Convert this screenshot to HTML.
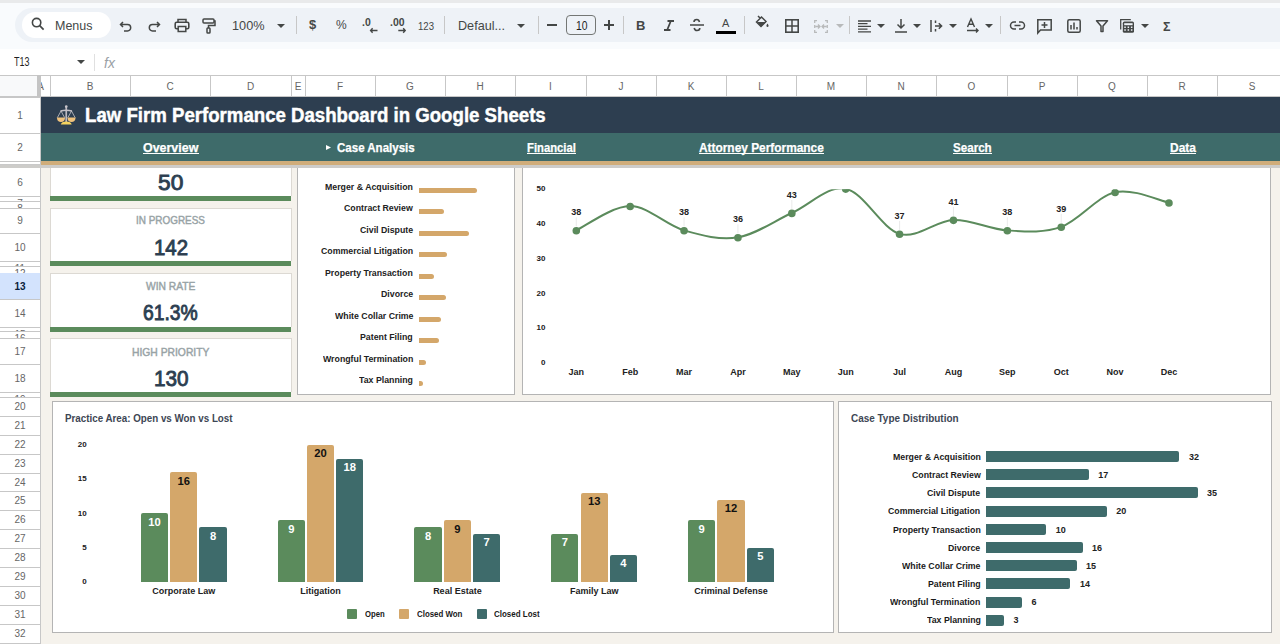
<!DOCTYPE html>
<html><head><meta charset="utf-8">
<style>
*{margin:0;padding:0;box-sizing:border-box}
html,body{width:1280px;height:644px;overflow:hidden;background:#f9fbfd;font-family:"Liberation Sans",sans-serif;position:relative}
.a{position:absolute}
.t{position:absolute;white-space:nowrap;line-height:1}
svg{position:absolute;overflow:visible}
</style></head><body>
<div class="a" style="left:0px;top:0px;width:1280px;height:2.5px;background:#e9eaeb;"></div>
<div class="a" style="left:15px;top:8px;width:1300px;height:33.5px;background:#eef2f7;border-radius:17px"></div>
<div class="a" style="left:22px;top:12px;width:89px;height:26px;background:#ffffff;border-radius:13px"></div>
<svg style="left:31px;top:17px" width="14" height="14" viewBox="0 0 14 14"><circle cx="5.6" cy="5.6" r="4.2" fill="none" stroke="#444746" stroke-width="1.6"/><line x1="8.7" y1="8.7" x2="12.6" y2="12.6" stroke="#444746" stroke-width="1.7"/></svg>
<div class="t" style="left:54.50px;top:19.00px;font-size:13px;color:#444746;font-weight:normal;transform:scaleX(0.9612);transform-origin:0 0;">Menus</div>
<svg style="left:119px;top:19px" width="14" height="14" viewBox="0 0 14 14"><path d="M4 3 L1.5 5.5 L4 8 M1.8 5.5 H8.5 a3.2 3.2 0 0 1 0 6.4 H5" fill="none" stroke="#444746" stroke-width="1.5"/></svg>
<svg style="left:147px;top:19px" width="14" height="14" viewBox="0 0 14 14"><path d="M10 3 L12.5 5.5 L10 8 M12.2 5.5 H5.5 a3.2 3.2 0 0 0 0 6.4 H9" fill="none" stroke="#444746" stroke-width="1.5"/></svg>
<svg style="left:174px;top:18px" width="16" height="15" viewBox="0 0 16 15"><path d="M4 4 V1.5 H12 V4" fill="none" stroke="#444746" stroke-width="1.5"/><rect x="1.2" y="4.2" width="13.6" height="6.6" rx="1.5" fill="none" stroke="#444746" stroke-width="1.6"/><rect x="4.2" y="8.5" width="7.6" height="5" fill="#eef2f7" stroke="#444746" stroke-width="1.5"/></svg>
<svg style="left:202px;top:18px" width="14" height="16" viewBox="0 0 14 16"><rect x="1" y="1" width="11" height="4" rx="1" fill="none" stroke="#444746" stroke-width="1.5"/><path d="M12 3 H13 V7.5 H6.5 V10" fill="none" stroke="#444746" stroke-width="1.5"/><rect x="5" y="10" width="3" height="5" rx="0.8" fill="none" stroke="#444746" stroke-width="1.5"/></svg>
<div class="t" style="left:232.00px;top:19.00px;font-size:13px;color:#444746;font-weight:normal;transform:scaleX(0.9773);transform-origin:0 0;">100%</div>
<svg style="left:277px;top:24px" width="8" height="4" viewBox="0 0 8 4"><path d="M0 0 H8 L4 4Z" fill="#444746"/></svg>
<div class="a" style="left:296px;top:16px;width:1px;height:18px;background:#c7c7c7;"></div>
<div class="t" style="left:309px;top:18px;font-size:13px;color:#444746;font-weight:bold;">$</div>
<div class="t" style="left:336px;top:19px;font-size:12px;color:#444746;font-weight:normal;">%</div>
<div class="t" style="left:362.30px;top:17.00px;font-size:11px;color:#444746;font-weight:bold;transform:scaleX(0.9483);transform-origin:0 0;">.0</div>
<svg style="left:369.5px;top:28px" width="8" height="5" viewBox="0 0 8 5"><path d="M2.6 0.3 L0.6 2.5 L2.6 4.7 M1 2.5 H7.5" fill="none" stroke="#444746" stroke-width="1.4"/></svg>
<div class="t" style="left:390.30px;top:17.00px;font-size:11px;color:#444746;font-weight:bold;transform:scaleX(0.9483);transform-origin:0 0;">.00</div>
<svg style="left:397.5px;top:28px" width="8" height="5" viewBox="0 0 8 5"><path d="M5.2 0.3 L7.2 2.5 L5.2 4.7 M6.8 2.5 H0.3" fill="none" stroke="#444746" stroke-width="1.4"/></svg>
<div class="t" style="left:418.00px;top:21.00px;font-size:11px;color:#444746;font-weight:normal;transform:scaleX(0.8720);transform-origin:0 0;">123</div>
<div class="a" style="left:444px;top:16px;width:1px;height:18px;background:#c7c7c7;"></div>
<div class="t" style="left:458.00px;top:19.00px;font-size:13px;color:#444746;font-weight:normal;transform:scaleX(0.9708);transform-origin:0 0;">Defaul...</div>
<svg style="left:517px;top:24px" width="8" height="4" viewBox="0 0 8 4"><path d="M0 0 H8 L4 4Z" fill="#444746"/></svg>
<div class="a" style="left:538px;top:16px;width:1px;height:18px;background:#c7c7c7;"></div>
<div class="a" style="left:547px;top:24px;width:10px;height:1.6px;background:#444746;"></div>
<div class="a" style="left:566px;top:15px;width:30px;height:20px;background:transparent;border:1px solid #747775;border-radius:4px"></div>
<div class="t" style="left:575.50px;top:19.00px;font-size:13px;color:#1f1f1f;font-weight:normal;transform:scaleX(0.7955);transform-origin:0 0;">10</div>
<div class="a" style="left:604px;top:24px;width:10px;height:1.6px;background:#444746;"></div>
<div class="a" style="left:608.2px;top:19.8px;width:1.6px;height:10px;background:#444746;"></div>
<div class="a" style="left:623px;top:16px;width:1px;height:18px;background:#c7c7c7;"></div>
<div class="t" style="left:636px;top:19px;font-size:13px;color:#444746;font-weight:bold;">B</div>
<svg style="left:663px;top:19.5px" width="12" height="11" viewBox="0 0 12 11"><path d="M4.5 1 H11 M1 10 H7.5 M7.8 1 L4.2 10" fill="none" stroke="#444746" stroke-width="1.8"/></svg>
<svg style="left:689px;top:18px" width="16" height="14" viewBox="0 0 16 14"><path d="M10.5 4 C10 2 9 1.5 7.8 1.5 C6 1.5 5 2.6 5 4 M5.2 10 C5.6 12 6.8 12.5 8 12.5 C9.8 12.5 10.8 11.5 10.8 10" fill="none" stroke="#444746" stroke-width="1.6"/><line x1="1" y1="7" x2="15" y2="7" stroke="#444746" stroke-width="1.5"/></svg>
<div class="t" style="left:722px;top:18px;font-size:11px;color:#444746;font-weight:normal;">A</div>
<div class="a" style="left:716px;top:31px;width:20px;height:3px;background:#000;"></div>
<div class="a" style="left:744px;top:16px;width:1px;height:18px;background:#c7c7c7;"></div>
<svg style="left:755px;top:15px" width="15" height="14" viewBox="0 0 15 14"><path d="M3 1 L5.5 3.5 M1.5 7 L6.5 2 L11 6.5 L6 11.5 Z" fill="none" stroke="#444746" stroke-width="1.5"/><path d="M2 7 L11 7 L6 11.5Z" fill="#444746"/><path d="M12.5 8.5 C11.5 10 11.3 10.6 11.5 11.3 A1.1 1.1 0 0 0 13.5 11.3 C13.7 10.6 13.5 10 12.5 8.5Z" fill="#444746"/></svg>
<svg style="left:785px;top:19px" width="14" height="14" viewBox="0 0 14 14"><rect x="0.8" y="0.8" width="12.4" height="12.4" fill="none" stroke="#444746" stroke-width="1.6"/><line x1="7" y1="1" x2="7" y2="13" stroke="#444746" stroke-width="1.5"/><line x1="1" y1="7" x2="13" y2="7" stroke="#444746" stroke-width="1.5"/></svg>
<svg style="left:814px;top:19.5px" width="14" height="13" viewBox="0 0 14 13"><path d="M3 0.7 H0.7 V3 M11 0.7 H13.3 V3 M3 12.3 H0.7 V10 M11 12.3 H13.3 V10 M0.7 5 V8 M13.3 5 V8 M1.5 6.5 H5.5 M4 4.5 L6 6.5 L4 8.5 M12.5 6.5 H8.5 M10 4.5 L8 6.5 L10 8.5" fill="none" stroke="#b8babb" stroke-width="1.3"/></svg>
<svg style="left:836px;top:24px" width="8" height="4" viewBox="0 0 8 4"><path d="M0 0 H8 L4 4Z" fill="#b8babb"/></svg>
<div class="a" style="left:849px;top:16px;width:1px;height:18px;background:#c7c7c7;"></div>
<svg style="left:858px;top:19.5px" width="14" height="13" viewBox="0 0 14 13"><path d="M0 1 H13 M0 3.7 H9.5 M0 6.4 H13 M0 9.1 H9.5 M0 11.8 H13" stroke="#444746" stroke-width="1.3"/></svg>
<svg style="left:877px;top:24px" width="8" height="4" viewBox="0 0 8 4"><path d="M0 0 H8 L4 4Z" fill="#444746"/></svg>
<svg style="left:895px;top:19px" width="12" height="14" viewBox="0 0 12 14"><path d="M6 0 V9 M2.5 5.5 L6 9 L9.5 5.5 M0 13 H12" fill="none" stroke="#444746" stroke-width="1.5"/></svg>
<svg style="left:913px;top:24px" width="8" height="4" viewBox="0 0 8 4"><path d="M0 0 H8 L4 4Z" fill="#444746"/></svg>
<svg style="left:930px;top:20px" width="13" height="12" viewBox="0 0 13 12"><path d="M1 0 V12 M5 6 H11.5 M8.8 3.2 L11.6 6 L8.8 8.8 M5.5 0.5 V3 M5.5 9 V11.5" fill="none" stroke="#444746" stroke-width="1.5"/></svg>
<svg style="left:949px;top:24px" width="8" height="4" viewBox="0 0 8 4"><path d="M0 0 H8 L4 4Z" fill="#444746"/></svg>
<svg style="left:966px;top:18px" width="14" height="15" viewBox="0 0 14 15"><path d="M1.5 9 L5 1 L8.5 9 M2.7 6.3 H7.3 M1 12.5 H12 M10 10.5 L12 12.5 L10 14.5" fill="none" stroke="#444746" stroke-width="1.4"/></svg>
<svg style="left:985px;top:24px" width="8" height="4" viewBox="0 0 8 4"><path d="M0 0 H8 L4 4Z" fill="#444746"/></svg>
<div class="a" style="left:1000px;top:16px;width:1px;height:18px;background:#c7c7c7;"></div>
<svg style="left:1010px;top:21px" width="15" height="9" viewBox="0 0 15 9"><path d="M6 1 H4 a3.5 3.5 0 0 0 0 7 H6 M9 1 H11 a3.5 3.5 0 0 1 0 7 H9 M4.5 4.5 H10.5" fill="none" stroke="#444746" stroke-width="1.5"/></svg>
<svg style="left:1037px;top:19px" width="15" height="15" viewBox="0 0 15 15"><path d="M0.8 14 V0.8 H14.2 V11 H3.5 Z M7.5 3 V9 M4.5 6 H10.5" fill="none" stroke="#444746" stroke-width="1.5"/></svg>
<svg style="left:1067px;top:19px" width="14" height="14" viewBox="0 0 14 14"><rect x="0.8" y="0.8" width="12.4" height="12.4" rx="1.5" fill="none" stroke="#444746" stroke-width="1.5"/><path d="M4 10.5 V6 M7 10.5 V3.5 M10 10.5 V8" stroke="#444746" stroke-width="1.5"/></svg>
<svg style="left:1096px;top:20px" width="12" height="12" viewBox="0 0 12 12"><path d="M0.5 0.8 H11.5 L7 6 V11.5 H5 V6 Z" fill="none" stroke="#444746" stroke-width="1.5" stroke-linejoin="round"/></svg>
<svg style="left:1120px;top:19px" width="15" height="14" viewBox="0 0 15 14"><path d="M0.7 10.5 V0.7 H10.8" fill="none" stroke="#444746" stroke-width="1.3"/><rect x="2.8" y="2.6" width="11.2" height="11.2" rx="1.6" fill="#444746"/><rect x="4.2" y="4.2" width="8.4" height="2" fill="#eef2f7"/><path d="M4.3 8.3 H5.8 M7.6 8.3 H9.1 M10.9 8.3 H12.4 M4.3 11 H5.8 M7.6 11 H9.1 M10.9 11 H12.4" stroke="#eef2f7" stroke-width="1.4"/></svg>
<svg style="left:1141px;top:24px" width="8" height="4" viewBox="0 0 8 4"><path d="M0 0 H8 L4 4Z" fill="#444746"/></svg>
<div class="t" style="left:1162.50px;top:20.00px;font-size:13px;color:#444746;font-weight:bold;transform:scaleX(0.9615);transform-origin:0 0;">&Sigma;</div>
<div class="a" style="left:0px;top:49px;width:1280px;height:26px;background:#ffffff;"></div>
<div class="t" style="left:13.50px;top:56.00px;font-size:12px;color:#1f1f1f;font-weight:normal;transform:scaleX(0.7497);transform-origin:0 0;">T13</div>
<svg style="left:77px;top:60px" width="8" height="4" viewBox="0 0 8 4"><path d="M0 0 H8 L4 4Z" fill="#444746"/></svg>
<div class="a" style="left:94px;top:54px;width:1px;height:17px;background:#e0e0e0;"></div>
<div class="t" style="left:104px;top:56px;font-size:14px;color:#9aa0a6;font-weight:normal;font-family:"Liberation Serif",serif"><i>fx</i></div>
<div class="a" style="left:0px;top:75px;width:1280px;height:1px;background:#c7c7c7;"></div>
<div class="a" style="left:0px;top:76px;width:1280px;height:20px;background:#ffffff;"></div>
<div class="a" style="left:0px;top:76px;width:37px;height:20px;background:#f8f9fa;"></div>
<div class="a" style="left:0px;top:96px;width:1280px;height:1px;background:#c7c7c7;"></div>
<div class="a" style="left:37px;top:75px;width:4px;height:22px;background:#c4c4c4;"></div>
<div class="a" style="left:50px;top:76px;width:1px;height:20px;background:#c7c7c7;"></div>
<div class="a" style="left:41px;top:76px;width:9px;height:20px;overflow:hidden">
<div class="t" style="left:-3.83px;top:6.00px;font-size:10px;color:#666666;font-weight:normal;">A</div>
</div>
<div class="a" style="left:130px;top:76px;width:1px;height:20px;background:#c7c7c7;"></div>
<div class="t" style="left:86.67px;top:82.00px;font-size:10px;color:#666666;font-weight:normal;">B</div>
<div class="a" style="left:210px;top:76px;width:1px;height:20px;background:#c7c7c7;"></div>
<div class="t" style="left:166.39px;top:82.00px;font-size:10px;color:#666666;font-weight:normal;">C</div>
<div class="a" style="left:291px;top:76px;width:1px;height:20px;background:#c7c7c7;"></div>
<div class="t" style="left:246.89px;top:82.00px;font-size:10px;color:#666666;font-weight:normal;">D</div>
<div class="a" style="left:305px;top:76px;width:1px;height:20px;background:#c7c7c7;"></div>
<div class="t" style="left:294.67px;top:82.00px;font-size:10px;color:#666666;font-weight:normal;">E</div>
<div class="a" style="left:375px;top:76px;width:1px;height:20px;background:#c7c7c7;"></div>
<div class="t" style="left:336.94px;top:82.00px;font-size:10px;color:#666666;font-weight:normal;">F</div>
<div class="a" style="left:445px;top:76px;width:1px;height:20px;background:#c7c7c7;"></div>
<div class="t" style="left:406.11px;top:82.00px;font-size:10px;color:#666666;font-weight:normal;">G</div>
<div class="a" style="left:515px;top:76px;width:1px;height:20px;background:#c7c7c7;"></div>
<div class="t" style="left:476.39px;top:82.00px;font-size:10px;color:#666666;font-weight:normal;">H</div>
<div class="a" style="left:586px;top:76px;width:1px;height:20px;background:#c7c7c7;"></div>
<div class="t" style="left:549.11px;top:82.00px;font-size:10px;color:#666666;font-weight:normal;">I</div>
<div class="a" style="left:656px;top:76px;width:1px;height:20px;background:#c7c7c7;"></div>
<div class="t" style="left:618.50px;top:82.00px;font-size:10px;color:#666666;font-weight:normal;">J</div>
<div class="a" style="left:726px;top:76px;width:1px;height:20px;background:#c7c7c7;"></div>
<div class="t" style="left:687.66px;top:82.00px;font-size:10px;color:#666666;font-weight:normal;">K</div>
<div class="a" style="left:796px;top:76px;width:1px;height:20px;background:#c7c7c7;"></div>
<div class="t" style="left:758.22px;top:82.00px;font-size:10px;color:#666666;font-weight:normal;">L</div>
<div class="a" style="left:866px;top:76px;width:1px;height:20px;background:#c7c7c7;"></div>
<div class="t" style="left:826.84px;top:82.00px;font-size:10px;color:#666666;font-weight:normal;">M</div>
<div class="a" style="left:936px;top:76px;width:1px;height:20px;background:#c7c7c7;"></div>
<div class="t" style="left:897.39px;top:82.00px;font-size:10px;color:#666666;font-weight:normal;">N</div>
<div class="a" style="left:1007px;top:76px;width:1px;height:20px;background:#c7c7c7;"></div>
<div class="t" style="left:967.61px;top:82.00px;font-size:10px;color:#666666;font-weight:normal;">O</div>
<div class="a" style="left:1077px;top:76px;width:1px;height:20px;background:#c7c7c7;"></div>
<div class="t" style="left:1038.66px;top:82.00px;font-size:10px;color:#666666;font-weight:normal;">P</div>
<div class="a" style="left:1147px;top:76px;width:1px;height:20px;background:#c7c7c7;"></div>
<div class="t" style="left:1108.11px;top:82.00px;font-size:10px;color:#666666;font-weight:normal;">Q</div>
<div class="a" style="left:1217px;top:76px;width:1px;height:20px;background:#c7c7c7;"></div>
<div class="t" style="left:1178.39px;top:82.00px;font-size:10px;color:#666666;font-weight:normal;">R</div>
<div class="a" style="left:1287px;top:76px;width:1px;height:20px;background:#c7c7c7;"></div>
<div class="t" style="left:1248.66px;top:82.00px;font-size:10px;color:#666666;font-weight:normal;">S</div>
<div class="a" style="left:0px;top:97px;width:40px;height:547px;background:#ffffff;"></div>
<div class="a" style="left:40px;top:97px;width:1px;height:547px;background:#c7c7c7;"></div>
<div class="a" style="left:0px;top:97px;width:40px;height:1px;background:#c7c7c7;"></div>
<div class="a" style="left:0px;top:133px;width:40px;height:1px;background:#c7c7c7;"></div>
<div class="t" style="left:17.22px;top:111.00px;font-size:10px;color:#666666;font-weight:normal;">1</div>
<div class="a" style="left:0px;top:161px;width:40px;height:1px;background:#c7c7c7;"></div>
<div class="t" style="left:17.22px;top:143.00px;font-size:10px;color:#666666;font-weight:normal;">2</div>
<div class="a" style="left:0px;top:196px;width:40px;height:1px;background:#c7c7c7;"></div>
<div class="t" style="left:17.22px;top:178.00px;font-size:10px;color:#666666;font-weight:normal;">6</div>
<div class="a" style="left:0px;top:201px;width:40px;height:1px;background:#c7c7c7;"></div>
<div class="a" style="left:0;top:197px;width:40px;height:4px;overflow:hidden">
<div class="t" style="left:17.22px;top:2.00px;font-size:10px;color:#666666;font-weight:normal;">7</div>
</div>
<div class="a" style="left:0px;top:208px;width:40px;height:1px;background:#c7c7c7;"></div>
<div class="a" style="left:0;top:202px;width:40px;height:6px;overflow:hidden">
<div class="t" style="left:17.22px;top:2.00px;font-size:10px;color:#666666;font-weight:normal;">8</div>
</div>
<div class="a" style="left:0px;top:233px;width:40px;height:1px;background:#c7c7c7;"></div>
<div class="t" style="left:17.22px;top:216.00px;font-size:10px;color:#666666;font-weight:normal;">9</div>
<div class="a" style="left:0px;top:261px;width:40px;height:1px;background:#c7c7c7;"></div>
<div class="t" style="left:14.44px;top:243.00px;font-size:10px;color:#666666;font-weight:normal;">10</div>
<div class="a" style="left:0px;top:266px;width:40px;height:1px;background:#c7c7c7;"></div>
<div class="a" style="left:0;top:262px;width:40px;height:4px;overflow:hidden">
<div class="t" style="left:14.81px;top:2.00px;font-size:10px;color:#666666;font-weight:normal;">11</div>
</div>
<div class="a" style="left:0px;top:273px;width:40px;height:1px;background:#c7c7c7;"></div>
<div class="a" style="left:0;top:267px;width:40px;height:6px;overflow:hidden">
<div class="t" style="left:14.44px;top:2.00px;font-size:10px;color:#666666;font-weight:normal;">12</div>
</div>
<div class="a" style="left:0px;top:273px;width:40px;height:26px;background:#d3e3fd;"></div>
<div class="a" style="left:0px;top:299px;width:40px;height:1px;background:#c7c7c7;"></div>
<div class="t" style="left:14.44px;top:282.00px;font-size:10px;color:#0b1d3a;font-weight:bold;">13</div>
<div class="a" style="left:0px;top:327px;width:40px;height:1px;background:#c7c7c7;"></div>
<div class="t" style="left:14.44px;top:309.00px;font-size:10px;color:#666666;font-weight:normal;">14</div>
<div class="a" style="left:0px;top:331px;width:40px;height:1px;background:#c7c7c7;"></div>
<div class="a" style="left:0;top:328px;width:40px;height:3px;overflow:hidden">
<div class="t" style="left:14.44px;top:2.00px;font-size:10px;color:#666666;font-weight:normal;">15</div>
</div>
<div class="a" style="left:0px;top:338px;width:40px;height:1px;background:#c7c7c7;"></div>
<div class="a" style="left:0;top:332px;width:40px;height:6px;overflow:hidden">
<div class="t" style="left:14.44px;top:2.00px;font-size:10px;color:#666666;font-weight:normal;">16</div>
</div>
<div class="a" style="left:0px;top:364px;width:40px;height:1px;background:#c7c7c7;"></div>
<div class="t" style="left:14.44px;top:347.00px;font-size:10px;color:#666666;font-weight:normal;">17</div>
<div class="a" style="left:0px;top:392px;width:40px;height:1px;background:#c7c7c7;"></div>
<div class="t" style="left:14.44px;top:374.00px;font-size:10px;color:#666666;font-weight:normal;">18</div>
<div class="a" style="left:0px;top:397px;width:40px;height:1px;background:#c7c7c7;"></div>
<div class="a" style="left:0;top:393px;width:40px;height:4px;overflow:hidden">
<div class="t" style="left:14.44px;top:2.00px;font-size:10px;color:#666666;font-weight:normal;">19</div>
</div>
<div class="a" style="left:0px;top:416px;width:40px;height:1px;background:#c7c7c7;"></div>
<div class="t" style="left:14.44px;top:402.00px;font-size:10px;color:#666666;font-weight:normal;">20</div>
<div class="a" style="left:0px;top:435px;width:40px;height:1px;background:#c7c7c7;"></div>
<div class="t" style="left:14.44px;top:421.00px;font-size:10px;color:#666666;font-weight:normal;">21</div>
<div class="a" style="left:0px;top:454px;width:40px;height:1px;background:#c7c7c7;"></div>
<div class="t" style="left:14.44px;top:440.00px;font-size:10px;color:#666666;font-weight:normal;">22</div>
<div class="a" style="left:0px;top:473px;width:40px;height:1px;background:#c7c7c7;"></div>
<div class="t" style="left:14.44px;top:459.00px;font-size:10px;color:#666666;font-weight:normal;">23</div>
<div class="a" style="left:0px;top:491px;width:40px;height:1px;background:#c7c7c7;"></div>
<div class="t" style="left:14.44px;top:478.00px;font-size:10px;color:#666666;font-weight:normal;">24</div>
<div class="a" style="left:0px;top:510px;width:40px;height:1px;background:#c7c7c7;"></div>
<div class="t" style="left:14.44px;top:496.00px;font-size:10px;color:#666666;font-weight:normal;">25</div>
<div class="a" style="left:0px;top:529px;width:40px;height:1px;background:#c7c7c7;"></div>
<div class="t" style="left:14.44px;top:515.00px;font-size:10px;color:#666666;font-weight:normal;">26</div>
<div class="a" style="left:0px;top:548px;width:40px;height:1px;background:#c7c7c7;"></div>
<div class="t" style="left:14.44px;top:534.00px;font-size:10px;color:#666666;font-weight:normal;">27</div>
<div class="a" style="left:0px;top:567px;width:40px;height:1px;background:#c7c7c7;"></div>
<div class="t" style="left:14.44px;top:553.00px;font-size:10px;color:#666666;font-weight:normal;">28</div>
<div class="a" style="left:0px;top:586px;width:40px;height:1px;background:#c7c7c7;"></div>
<div class="t" style="left:14.44px;top:572.00px;font-size:10px;color:#666666;font-weight:normal;">29</div>
<div class="a" style="left:0px;top:605px;width:40px;height:1px;background:#c7c7c7;"></div>
<div class="t" style="left:14.44px;top:591.00px;font-size:10px;color:#666666;font-weight:normal;">30</div>
<div class="a" style="left:0px;top:624px;width:40px;height:1px;background:#c7c7c7;"></div>
<div class="t" style="left:14.44px;top:610.00px;font-size:10px;color:#666666;font-weight:normal;">31</div>
<div class="a" style="left:0px;top:643px;width:40px;height:1px;background:#c7c7c7;"></div>
<div class="t" style="left:14.44px;top:629.00px;font-size:10px;color:#666666;font-weight:normal;">32</div>
<div class="a" style="left:41px;top:97px;width:1239px;height:547px;background:#f5f2ec;"></div>
<div class="a" style="left:41px;top:97px;width:1239px;height:36px;background:#2d3e50;"></div>
<div class="a" style="left:41px;top:133px;width:1239px;height:28px;background:#3e6b6a;"></div>
<div class="a" style="left:41px;top:161px;width:1239px;height:3px;background:#d1aa74;"></div>
<div class="a" style="left:0px;top:161px;width:40px;height:1px;background:#c7c7c7;"></div>
<div class="a" style="left:0px;top:164px;width:1280px;height:4px;background:#c9c9c9;"></div>
<svg style="left:56px;top:105px" width="21" height="20" viewBox="0 0 21 20"><rect x="9.4" y="1.2" width="1.7" height="16" fill="#bdbac2"/><circle cx="10.25" cy="1.6" r="1.3" fill="#cac7cd"/><path d="M4.5 6 Q10.25 4.6 16 6" stroke="#c3c0c7" stroke-width="1.5" fill="none"/><path d="M5 6 L1.4 12.6 M5 6 L8.6 12.6 M15.5 6 L11.9 12.6 M15.5 6 L19.1 12.6" stroke="#c8c5cb" stroke-width="0.8" fill="none"/><path d="M0.8 12.4 H9.2 Q8.6 17 5 17 Q1.4 17 0.8 12.4Z" fill="#f0c27c"/><path d="M11.3 12.4 H19.7 Q19.1 17 15.5 17 Q11.9 17 11.3 12.4Z" fill="#f0c27c"/><path d="M4.8 19.4 Q5.5 16.8 10.25 16.6 Q15 16.8 15.7 19.4Z" fill="#f4d35e"/></svg>
<div class="t" style="left:84.90px;top:105.00px;font-size:20.3px;color:#ffffff;font-weight:bold;transform:scaleX(0.9186);transform-origin:0 0;-webkit-text-stroke:0.45px #ffffff;">Law Firm Performance Dashboard in Google Sheets</div>
<div class="t" style="left:143.40px;top:142.00px;font-size:12.8px;color:#ffffff;font-weight:bold;transform:scaleX(0.9720);transform-origin:0 0;-webkit-text-stroke:0.25px #ffffff;">Overview</div>
<div class="a" style="left:143.4px;top:153.2px;width:55.349999999999994px;height:1.1px;background:#ffffff;"></div>
<svg style="left:326px;top:145px" width="5" height="5" viewBox="0 0 5 5"><path d="M0 0 L5 2.5 L0 5Z" fill="#ffffff"/></svg>
<div class="t" style="left:336.80px;top:142.00px;font-size:12.8px;color:#ffffff;font-weight:bold;transform:scaleX(0.9000);transform-origin:0 0;-webkit-text-stroke:0.25px #ffffff;">Case Analysis</div>
<div class="t" style="left:526.80px;top:142.00px;font-size:12.8px;color:#ffffff;font-weight:bold;transform:scaleX(0.8797);transform-origin:0 0;-webkit-text-stroke:0.25px #ffffff;">Financial</div>
<div class="a" style="left:526.8px;top:153.2px;width:48.80000000000007px;height:1.1px;background:#ffffff;"></div>
<div class="t" style="left:699.40px;top:142.00px;font-size:12.8px;color:#ffffff;font-weight:bold;transform:scaleX(0.9283);transform-origin:0 0;-webkit-text-stroke:0.25px #ffffff;">Attorney Performance</div>
<div class="a" style="left:699.4px;top:153.2px;width:124.80000000000007px;height:1.1px;background:#ffffff;"></div>
<div class="t" style="left:952.90px;top:142.00px;font-size:12.8px;color:#ffffff;font-weight:bold;transform:scaleX(0.9066);transform-origin:0 0;-webkit-text-stroke:0.25px #ffffff;">Search</div>
<div class="a" style="left:952.9px;top:153.2px;width:38.700000000000045px;height:1.1px;background:#ffffff;"></div>
<div class="t" style="left:1169.50px;top:142.00px;font-size:12.8px;color:#ffffff;font-weight:bold;transform:scaleX(0.9343);transform-origin:0 0;-webkit-text-stroke:0.25px #ffffff;">Data</div>
<div class="a" style="left:1169.5px;top:153.2px;width:26.0px;height:1.1px;background:#ffffff;"></div>
<div class="a" style="left:50px;top:168px;width:242px;height:28px;background:#ffffff;"></div>
<div class="a" style="left:50px;top:168px;width:1px;height:28px;background:#dcd9d3;"></div>
<div class="a" style="left:291px;top:168px;width:1px;height:28px;background:#dcd9d3;"></div>
<div class="a" style="left:50px;top:196px;width:241px;height:5px;background:#5b8b5c;"></div>
<div class="a" style="left:50px;top:208px;width:242px;height:53px;background:#ffffff;"></div>
<div class="a" style="left:50px;top:208px;width:242px;height:1px;background:#dcd9d3;"></div>
<div class="a" style="left:50px;top:208px;width:1px;height:53px;background:#dcd9d3;"></div>
<div class="a" style="left:291px;top:208px;width:1px;height:53px;background:#dcd9d3;"></div>
<div class="a" style="left:50px;top:261px;width:241px;height:5px;background:#5b8b5c;"></div>
<div class="a" style="left:50px;top:273px;width:242px;height:54px;background:#ffffff;"></div>
<div class="a" style="left:50px;top:273px;width:242px;height:1px;background:#dcd9d3;"></div>
<div class="a" style="left:50px;top:273px;width:1px;height:54px;background:#dcd9d3;"></div>
<div class="a" style="left:291px;top:273px;width:1px;height:54px;background:#dcd9d3;"></div>
<div class="a" style="left:50px;top:327px;width:241px;height:5px;background:#5b8b5c;"></div>
<div class="a" style="left:50px;top:338px;width:242px;height:54px;background:#ffffff;"></div>
<div class="a" style="left:50px;top:338px;width:242px;height:1px;background:#dcd9d3;"></div>
<div class="a" style="left:50px;top:338px;width:1px;height:54px;background:#dcd9d3;"></div>
<div class="a" style="left:291px;top:338px;width:1px;height:54px;background:#dcd9d3;"></div>
<div class="a" style="left:50px;top:392px;width:241px;height:5px;background:#5b8b5c;"></div>
<div class="t" style="left:158.40px;top:172.00px;font-size:22.5px;color:#2c3e50;font-weight:normal;transform:scaleX(1.0112);transform-origin:0 0;-webkit-text-stroke:0.9px #2c3e50;">50</div>
<div class="t" style="left:136.40px;top:215.00px;font-size:11.2px;color:#98a3a6;font-weight:normal;transform:scaleX(0.8869);transform-origin:0 0;-webkit-text-stroke:0.45px #98a3a6;">IN PROGRESS</div>
<div class="t" style="left:154.00px;top:237.00px;font-size:22.5px;color:#2c3e50;font-weight:normal;transform:scaleX(0.9059);transform-origin:0 0;-webkit-text-stroke:0.9px #2c3e50;">142</div>
<div class="t" style="left:146.40px;top:281.00px;font-size:11.2px;color:#98a3a6;font-weight:normal;transform:scaleX(0.9181);transform-origin:0 0;-webkit-text-stroke:0.45px #98a3a6;">WIN RATE</div>
<div class="t" style="left:143.40px;top:302.00px;font-size:22.5px;color:#2c3e50;font-weight:normal;transform:scaleX(0.8591);transform-origin:0 0;-webkit-text-stroke:0.9px #2c3e50;">61.3%</div>
<div class="t" style="left:132.30px;top:347.00px;font-size:11.2px;color:#98a3a6;font-weight:normal;transform:scaleX(0.9225);transform-origin:0 0;-webkit-text-stroke:0.45px #98a3a6;">HIGH PRIORITY</div>
<div class="t" style="left:153.60px;top:368.00px;font-size:22.5px;color:#2c3e50;font-weight:normal;transform:scaleX(0.9219);transform-origin:0 0;-webkit-text-stroke:0.9px #2c3e50;">130</div>
<div class="a" style="left:297px;top:168px;width:218px;height:227px;background:#ffffff;border:1px solid #b4b4b4;border-top:none"></div>
<div class="a" style="left:522px;top:168px;width:749px;height:227px;background:#ffffff;border:1px solid #b4b4b4;border-top:none"></div>
<div class="a" style="left:52px;top:401px;width:782px;height:232px;background:#ffffff;border:1px solid #b4b4b4"></div>
<div class="a" style="left:838px;top:401px;width:434px;height:232px;background:#ffffff;border:1px solid #b4b4b4"></div>
<div class="a" style="left:41px;top:161px;width:1239px;height:3.5px;background:#d0ad7a;"></div>
<div class="a" style="left:0px;top:164.5px;width:1280px;height:3.5px;background:#cdccc9;"></div>
<div class="t" style="left:325.07px;top:183.00px;font-size:9px;color:#222222;font-weight:bold;transform:scaleX(0.9750);transform-origin:0 0;">Merger &amp; Acquisition</div>
<div class="a" style="left:418.5px;top:187.6px;width:58.30000000000001px;height:5px;background:#d4a76a;border-radius:0 2.5px 2.5px 0"></div>
<div class="t" style="left:344.22px;top:204.00px;font-size:9px;color:#222222;font-weight:bold;transform:scaleX(0.9750);transform-origin:0 0;">Contract Review</div>
<div class="a" style="left:418.5px;top:209.1px;width:25.30000000000001px;height:5px;background:#d4a76a;border-radius:0 2.5px 2.5px 0"></div>
<div class="t" style="left:359.85px;top:226.00px;font-size:9px;color:#222222;font-weight:bold;transform:scaleX(0.9750);transform-origin:0 0;">Civil Dispute</div>
<div class="a" style="left:418.5px;top:230.6px;width:50.5px;height:5px;background:#d4a76a;border-radius:0 2.5px 2.5px 0"></div>
<div class="t" style="left:320.85px;top:247.00px;font-size:9px;color:#222222;font-weight:bold;transform:scaleX(0.9750);transform-origin:0 0;">Commercial Litigation</div>
<div class="a" style="left:418.5px;top:252.1px;width:28.399999999999977px;height:5px;background:#d4a76a;border-radius:0 2.5px 2.5px 0"></div>
<div class="t" style="left:325.22px;top:269.00px;font-size:9px;color:#222222;font-weight:bold;transform:scaleX(0.9750);transform-origin:0 0;">Property Transaction</div>
<div class="a" style="left:418.5px;top:273.6px;width:15.5px;height:5px;background:#d4a76a;border-radius:0 2.5px 2.5px 0"></div>
<div class="t" style="left:380.81px;top:290.00px;font-size:9px;color:#222222;font-weight:bold;transform:scaleX(0.9750);transform-origin:0 0;">Divorce</div>
<div class="a" style="left:418.5px;top:295.1px;width:27.5px;height:5px;background:#d4a76a;border-radius:0 2.5px 2.5px 0"></div>
<div class="t" style="left:334.50px;top:312.00px;font-size:9px;color:#222222;font-weight:bold;transform:scaleX(0.9750);transform-origin:0 0;">White Collar Crime</div>
<div class="a" style="left:418.5px;top:316.6px;width:22.19999999999999px;height:5px;background:#d4a76a;border-radius:0 2.5px 2.5px 0"></div>
<div class="t" style="left:360.35px;top:333.00px;font-size:9px;color:#222222;font-weight:bold;transform:scaleX(0.9750);transform-origin:0 0;">Patent Filing</div>
<div class="a" style="left:418.5px;top:338.1px;width:20.399999999999977px;height:5px;background:#d4a76a;border-radius:0 2.5px 2.5px 0"></div>
<div class="t" style="left:322.66px;top:355.00px;font-size:9px;color:#222222;font-weight:bold;transform:scaleX(0.9750);transform-origin:0 0;">Wrongful Termination</div>
<div class="a" style="left:418.5px;top:359.6px;width:7.0px;height:5px;background:#d4a76a;border-radius:0 2.5px 2.5px 0"></div>
<div class="t" style="left:359.04px;top:376.00px;font-size:9px;color:#222222;font-weight:bold;transform:scaleX(0.9750);transform-origin:0 0;">Tax Planning</div>
<div class="a" style="left:418.5px;top:381.1px;width:4.699999999999989px;height:5px;background:#d4a76a;border-radius:0 2.5px 2.5px 0"></div>
<div class="t" style="left:536.50px;top:185.00px;font-size:8px;color:#1a1a1a;font-weight:bold;">50</div>
<div class="t" style="left:536.50px;top:220.00px;font-size:8px;color:#1a1a1a;font-weight:bold;">40</div>
<div class="t" style="left:536.50px;top:255.00px;font-size:8px;color:#1a1a1a;font-weight:bold;">30</div>
<div class="t" style="left:536.50px;top:290.00px;font-size:8px;color:#1a1a1a;font-weight:bold;">20</div>
<div class="t" style="left:536.50px;top:324.00px;font-size:8px;color:#1a1a1a;font-weight:bold;">10</div>
<div class="t" style="left:540.95px;top:359.00px;font-size:8px;color:#1a1a1a;font-weight:bold;">0</div>
<div class="t" style="left:568.55px;top:368.00px;font-size:9px;color:#222222;font-weight:bold;">Jan</div>
<div class="t" style="left:622.18px;top:368.00px;font-size:9px;color:#222222;font-weight:bold;">Feb</div>
<div class="t" style="left:676.06px;top:368.00px;font-size:9px;color:#222222;font-weight:bold;">Mar</div>
<div class="t" style="left:730.19px;top:368.00px;font-size:9px;color:#222222;font-weight:bold;">Apr</div>
<div class="t" style="left:783.07px;top:368.00px;font-size:9px;color:#222222;font-weight:bold;">May</div>
<div class="t" style="left:837.70px;top:368.00px;font-size:9px;color:#222222;font-weight:bold;">Jun</div>
<div class="t" style="left:893.08px;top:368.00px;font-size:9px;color:#222222;font-weight:bold;">Jul</div>
<div class="t" style="left:944.71px;top:368.00px;font-size:9px;color:#222222;font-weight:bold;">Aug</div>
<div class="t" style="left:999.09px;top:368.00px;font-size:9px;color:#222222;font-weight:bold;">Sep</div>
<div class="t" style="left:1053.72px;top:368.00px;font-size:9px;color:#222222;font-weight:bold;">Oct</div>
<div class="t" style="left:1106.60px;top:368.00px;font-size:9px;color:#222222;font-weight:bold;">Nov</div>
<div class="t" style="left:1160.73px;top:368.00px;font-size:9px;color:#222222;font-weight:bold;">Dec</div>
<svg style="left:0;top:0" width="1280" height="644" viewBox="0 0 1280 644"><defs><clipPath id="lc"><rect x="523" y="189.3" width="747" height="200"/></clipPath></defs><g clip-path="url(#lc)"><line x1="576.30" y1="217.39" x2="576.30" y2="226.39" stroke="#e4e4e4" stroke-width="0.8"/><line x1="684.06" y1="217.39" x2="684.06" y2="226.39" stroke="#e4e4e4" stroke-width="0.8"/><line x1="737.94" y1="224.34" x2="737.94" y2="233.34" stroke="#e4e4e4" stroke-width="0.8"/><line x1="791.82" y1="200.02" x2="791.82" y2="209.02" stroke="#e4e4e4" stroke-width="0.8"/><line x1="899.58" y1="220.86" x2="899.58" y2="229.86" stroke="#e4e4e4" stroke-width="0.8"/><line x1="953.46" y1="206.97" x2="953.46" y2="215.97" stroke="#e4e4e4" stroke-width="0.8"/><line x1="1007.34" y1="217.39" x2="1007.34" y2="226.39" stroke="#e4e4e4" stroke-width="0.8"/><line x1="1061.22" y1="213.91" x2="1061.22" y2="222.91" stroke="#e4e4e4" stroke-width="0.8"/><path d="M576.30,230.39 C585.28,226.33 612.22,206.07 630.18,206.07 C648.14,206.07 666.10,225.18 684.06,230.39 C702.02,235.60 719.98,240.23 737.94,237.34 C755.90,234.44 773.86,221.12 791.82,213.02 C809.78,204.91 827.74,185.23 845.70,188.70 C863.66,192.17 881.62,228.65 899.58,233.86 C917.54,239.07 935.50,220.54 953.46,219.97 C971.42,219.39 989.38,229.23 1007.34,230.39 C1025.30,231.55 1043.26,233.28 1061.22,226.91 C1079.18,220.54 1097.14,196.23 1115.10,192.17 C1133.06,188.12 1160.00,200.86 1168.98,202.60" fill="none" stroke="#5b8b5c" stroke-width="2"/><circle cx="576.30" cy="230.79" r="3.8" fill="#5b8b5c"/><circle cx="630.18" cy="206.47" r="3.8" fill="#5b8b5c"/><circle cx="684.06" cy="230.79" r="3.8" fill="#5b8b5c"/><circle cx="737.94" cy="237.74" r="3.8" fill="#5b8b5c"/><circle cx="791.82" cy="213.42" r="3.8" fill="#5b8b5c"/><circle cx="845.70" cy="189.10" r="3.8" fill="#5b8b5c"/><circle cx="899.58" cy="234.26" r="3.8" fill="#5b8b5c"/><circle cx="953.46" cy="220.37" r="3.8" fill="#5b8b5c"/><circle cx="1007.34" cy="230.79" r="3.8" fill="#5b8b5c"/><circle cx="1061.22" cy="227.31" r="3.8" fill="#5b8b5c"/><circle cx="1115.10" cy="192.57" r="3.8" fill="#5b8b5c"/><circle cx="1168.98" cy="203.00" r="3.8" fill="#5b8b5c"/></g></svg>
<div class="t" style="left:571.30px;top:208.00px;font-size:9px;color:#222222;font-weight:bold;">38</div>
<div class="t" style="left:679.06px;top:208.00px;font-size:9px;color:#222222;font-weight:bold;">38</div>
<div class="t" style="left:732.94px;top:215.00px;font-size:9px;color:#222222;font-weight:bold;">36</div>
<div class="t" style="left:786.82px;top:191.00px;font-size:9px;color:#222222;font-weight:bold;">43</div>
<div class="t" style="left:894.58px;top:212.00px;font-size:9px;color:#222222;font-weight:bold;">37</div>
<div class="t" style="left:948.46px;top:198.00px;font-size:9px;color:#222222;font-weight:bold;">41</div>
<div class="t" style="left:1002.34px;top:208.00px;font-size:9px;color:#222222;font-weight:bold;">38</div>
<div class="t" style="left:1056.22px;top:205.00px;font-size:9px;color:#222222;font-weight:bold;">39</div>
<div class="t" style="left:0;top:0"></div>
<div class="t" style="left:65.00px;top:413.00px;font-size:10.8px;color:#3d4654;font-weight:bold;transform:scaleX(0.9066);transform-origin:0 0;">Practice Area: Open vs Won vs Lost</div>
<div class="t" style="left:82.25px;top:578.00px;font-size:8px;color:#1a1a1a;font-weight:bold;">0</div>
<div class="t" style="left:82.25px;top:544.00px;font-size:8px;color:#1a1a1a;font-weight:bold;">5</div>
<div class="t" style="left:77.80px;top:510.00px;font-size:8px;color:#1a1a1a;font-weight:bold;">10</div>
<div class="t" style="left:77.80px;top:475.00px;font-size:8px;color:#1a1a1a;font-weight:bold;">15</div>
<div class="t" style="left:77.80px;top:441.00px;font-size:8px;color:#1a1a1a;font-weight:bold;">20</div>
<div class="a" style="left:140.8px;top:513.4px;width:27.3px;height:68.60000000000002px;background:#5b8b5c;border-radius:2px 2px 0 0"></div>
<div class="t" style="left:148.22px;top:517.00px;font-size:11.2px;color:#ffffff;font-weight:bold;">10</div>
<div class="a" style="left:170.10000000000002px;top:472.24px;width:27.3px;height:109.75999999999999px;background:#d4a76a;border-radius:2px 2px 0 0"></div>
<div class="t" style="left:177.52px;top:476.00px;font-size:11.2px;color:#111111;font-weight:bold;">16</div>
<div class="a" style="left:199.4px;top:527.12px;width:27.3px;height:54.879999999999995px;background:#3e6b6b;border-radius:2px 2px 0 0"></div>
<div class="t" style="left:209.94px;top:531.00px;font-size:11.2px;color:#ffffff;font-weight:bold;">8</div>
<div class="t" style="left:152.29px;top:587.00px;font-size:9px;color:#222222;font-weight:bold;">Corporate Law</div>
<div class="a" style="left:277.6px;top:520.26px;width:27.3px;height:61.74000000000001px;background:#5b8b5c;border-radius:2px 2px 0 0"></div>
<div class="t" style="left:288.14px;top:524.00px;font-size:11.2px;color:#ffffff;font-weight:bold;">9</div>
<div class="a" style="left:306.90000000000003px;top:444.79999999999995px;width:27.3px;height:137.20000000000005px;background:#d4a76a;border-radius:2px 2px 0 0"></div>
<div class="t" style="left:314.32px;top:448.00px;font-size:11.2px;color:#111111;font-weight:bold;">20</div>
<div class="a" style="left:336.20000000000005px;top:458.52px;width:27.3px;height:123.48000000000002px;background:#3e6b6b;border-radius:2px 2px 0 0"></div>
<div class="t" style="left:343.62px;top:462.00px;font-size:11.2px;color:#ffffff;font-weight:bold;">18</div>
<div class="t" style="left:300.35px;top:587.00px;font-size:9px;color:#222222;font-weight:bold;">Litigation</div>
<div class="a" style="left:414.40000000000003px;top:527.12px;width:27.3px;height:54.879999999999995px;background:#5b8b5c;border-radius:2px 2px 0 0"></div>
<div class="t" style="left:424.94px;top:531.00px;font-size:11.2px;color:#ffffff;font-weight:bold;">8</div>
<div class="a" style="left:443.70000000000005px;top:520.26px;width:27.3px;height:61.74000000000001px;background:#d4a76a;border-radius:2px 2px 0 0"></div>
<div class="t" style="left:454.24px;top:524.00px;font-size:11.2px;color:#111111;font-weight:bold;">9</div>
<div class="a" style="left:473.00000000000006px;top:533.98px;width:27.3px;height:48.01999999999998px;background:#3e6b6b;border-radius:2px 2px 0 0"></div>
<div class="t" style="left:483.54px;top:537.00px;font-size:11.2px;color:#ffffff;font-weight:bold;">7</div>
<div class="t" style="left:433.14px;top:587.00px;font-size:9px;color:#222222;font-weight:bold;">Real Estate</div>
<div class="a" style="left:551.2px;top:533.98px;width:27.3px;height:48.01999999999998px;background:#5b8b5c;border-radius:2px 2px 0 0"></div>
<div class="t" style="left:561.74px;top:537.00px;font-size:11.2px;color:#ffffff;font-weight:bold;">7</div>
<div class="a" style="left:580.5px;top:492.82px;width:27.3px;height:89.18px;background:#d4a76a;border-radius:2px 2px 0 0"></div>
<div class="t" style="left:587.92px;top:496.00px;font-size:11.2px;color:#111111;font-weight:bold;">13</div>
<div class="a" style="left:609.8000000000001px;top:554.56px;width:27.3px;height:27.440000000000055px;background:#3e6b6b;border-radius:2px 2px 0 0"></div>
<div class="t" style="left:620.34px;top:558.00px;font-size:11.2px;color:#ffffff;font-weight:bold;">4</div>
<div class="t" style="left:569.93px;top:587.00px;font-size:9px;color:#222222;font-weight:bold;">Family Law</div>
<div class="a" style="left:688.0px;top:520.26px;width:27.3px;height:61.74000000000001px;background:#5b8b5c;border-radius:2px 2px 0 0"></div>
<div class="t" style="left:698.54px;top:524.00px;font-size:11.2px;color:#ffffff;font-weight:bold;">9</div>
<div class="a" style="left:717.3px;top:499.68px;width:27.3px;height:82.32px;background:#d4a76a;border-radius:2px 2px 0 0"></div>
<div class="t" style="left:724.72px;top:503.00px;font-size:11.2px;color:#111111;font-weight:bold;">12</div>
<div class="a" style="left:746.6px;top:547.7px;width:27.3px;height:34.299999999999955px;background:#3e6b6b;border-radius:2px 2px 0 0"></div>
<div class="t" style="left:757.14px;top:551.00px;font-size:11.2px;color:#ffffff;font-weight:bold;">5</div>
<div class="t" style="left:694.24px;top:587.00px;font-size:9px;color:#222222;font-weight:bold;">Criminal Defense</div>
<div class="a" style="left:346.7px;top:609px;width:10px;height:10px;background:#5b8b5c;border-radius:1px"></div>
<div class="t" style="left:364.60px;top:610.00px;font-size:8.5px;color:#1a1a1a;font-weight:bold;transform:scaleX(0.9067);transform-origin:0 0;">Open</div>
<div class="a" style="left:399px;top:609px;width:10px;height:10px;background:#d4a76a;border-radius:1px"></div>
<div class="t" style="left:416.70px;top:610.00px;font-size:8.5px;color:#1a1a1a;font-weight:bold;transform:scaleX(0.9274);transform-origin:0 0;">Closed Won</div>
<div class="a" style="left:477px;top:609px;width:10px;height:10px;background:#3e6b6b;border-radius:1px"></div>
<div class="t" style="left:494.40px;top:610.00px;font-size:8.5px;color:#1a1a1a;font-weight:bold;transform:scaleX(0.9374);transform-origin:0 0;">Closed Lost</div>
<div class="t" style="left:850.80px;top:413.00px;font-size:10.8px;color:#3d4654;font-weight:bold;transform:scaleX(0.9211);transform-origin:0 0;">Case Type Distribution</div>
<div class="t" style="left:892.67px;top:453.00px;font-size:9px;color:#1a1a1a;font-weight:bold;transform:scaleX(0.9750);transform-origin:0 0;">Merger &amp; Acquisition</div>
<div class="a" style="left:985.8px;top:451.1px;width:193.5999999999999px;height:11px;background:#3e6b6b;border-radius:0 2px 2px 0"></div>
<div class="t" style="left:1188.90px;top:453.00px;font-size:9px;color:#222222;font-weight:bold;">32</div>
<div class="t" style="left:911.82px;top:471.00px;font-size:9px;color:#1a1a1a;font-weight:bold;transform:scaleX(0.9750);transform-origin:0 0;">Contract Review</div>
<div class="a" style="left:985.8px;top:469.28000000000003px;width:102.84999999999991px;height:11px;background:#3e6b6b;border-radius:0 2px 2px 0"></div>
<div class="t" style="left:1098.15px;top:471.00px;font-size:9px;color:#222222;font-weight:bold;">17</div>
<div class="t" style="left:927.45px;top:489.00px;font-size:9px;color:#1a1a1a;font-weight:bold;transform:scaleX(0.9750);transform-origin:0 0;">Civil Dispute</div>
<div class="a" style="left:985.8px;top:487.46000000000004px;width:211.75px;height:11px;background:#3e6b6b;border-radius:0 2px 2px 0"></div>
<div class="t" style="left:1207.05px;top:489.00px;font-size:9px;color:#222222;font-weight:bold;">35</div>
<div class="t" style="left:888.45px;top:507.00px;font-size:9px;color:#1a1a1a;font-weight:bold;transform:scaleX(0.9750);transform-origin:0 0;">Commercial Litigation</div>
<div class="a" style="left:985.8px;top:505.64000000000004px;width:121.0px;height:11px;background:#3e6b6b;border-radius:0 2px 2px 0"></div>
<div class="t" style="left:1116.30px;top:507.00px;font-size:9px;color:#222222;font-weight:bold;">20</div>
<div class="t" style="left:892.82px;top:526.00px;font-size:9px;color:#1a1a1a;font-weight:bold;transform:scaleX(0.9750);transform-origin:0 0;">Property Transaction</div>
<div class="a" style="left:985.8px;top:523.82px;width:60.5px;height:11px;background:#3e6b6b;border-radius:0 2px 2px 0"></div>
<div class="t" style="left:1055.80px;top:526.00px;font-size:9px;color:#222222;font-weight:bold;">10</div>
<div class="t" style="left:948.41px;top:544.00px;font-size:9px;color:#1a1a1a;font-weight:bold;transform:scaleX(0.9750);transform-origin:0 0;">Divorce</div>
<div class="a" style="left:985.8px;top:542.0px;width:96.79999999999995px;height:11px;background:#3e6b6b;border-radius:0 2px 2px 0"></div>
<div class="t" style="left:1092.10px;top:544.00px;font-size:9px;color:#222222;font-weight:bold;">16</div>
<div class="t" style="left:902.10px;top:562.00px;font-size:9px;color:#1a1a1a;font-weight:bold;transform:scaleX(0.9750);transform-origin:0 0;">White Collar Crime</div>
<div class="a" style="left:985.8px;top:560.1800000000001px;width:90.75px;height:11px;background:#3e6b6b;border-radius:0 2px 2px 0"></div>
<div class="t" style="left:1086.05px;top:562.00px;font-size:9px;color:#222222;font-weight:bold;">15</div>
<div class="t" style="left:927.95px;top:580.00px;font-size:9px;color:#1a1a1a;font-weight:bold;transform:scaleX(0.9750);transform-origin:0 0;">Patent Filing</div>
<div class="a" style="left:985.8px;top:578.36px;width:84.70000000000005px;height:11px;background:#3e6b6b;border-radius:0 2px 2px 0"></div>
<div class="t" style="left:1080.00px;top:580.00px;font-size:9px;color:#222222;font-weight:bold;">14</div>
<div class="t" style="left:890.26px;top:598.00px;font-size:9px;color:#1a1a1a;font-weight:bold;transform:scaleX(0.9750);transform-origin:0 0;">Wrongful Termination</div>
<div class="a" style="left:985.8px;top:596.54px;width:36.299999999999955px;height:11px;background:#3e6b6b;border-radius:0 2px 2px 0"></div>
<div class="t" style="left:1031.60px;top:598.00px;font-size:9px;color:#222222;font-weight:bold;">6</div>
<div class="t" style="left:926.64px;top:616.00px;font-size:9px;color:#1a1a1a;font-weight:bold;transform:scaleX(0.9750);transform-origin:0 0;">Tax Planning</div>
<div class="a" style="left:985.8px;top:614.72px;width:18.149999999999977px;height:11px;background:#3e6b6b;border-radius:0 2px 2px 0"></div>
<div class="t" style="left:1013.45px;top:616.00px;font-size:9px;color:#222222;font-weight:bold;">3</div>
</body></html>
